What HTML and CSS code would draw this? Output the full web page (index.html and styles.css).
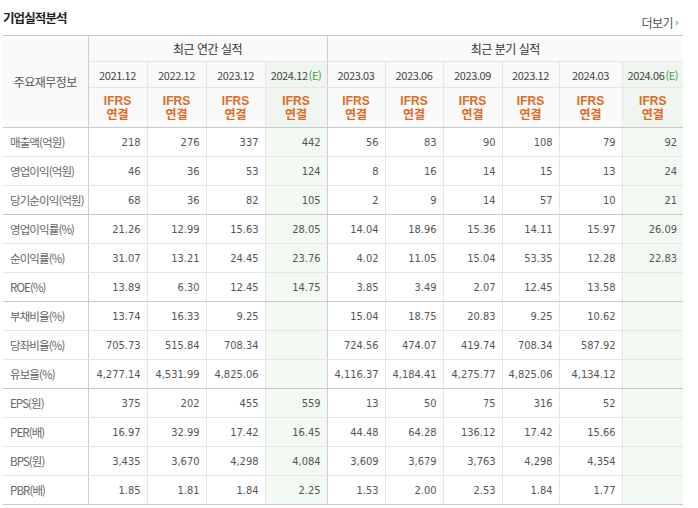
FILE: index.html
```html
<!DOCTYPE html>
<html lang="ko">
<head>
<meta charset="utf-8">
<link rel="stylesheet" href="styles.css">
</head>
<body>
<div class="wrap">
  <div class="top">
    <h2 class="title">기업실적분석</h2>
    <a class="more">더보기<span class="arr"></span></a>
  </div>
  <table class="fin">
    <colgroup>
      <col class="c-label"><col class="c59"><col class="c59"><col class="c59"><col class="c62">
      <col class="c58"><col class="c58"><col class="c59"><col class="c57"><col class="c63"><col class="c61">
    </colgroup>
    <thead>
      <tr class="h1">
        <th rowspan="3" class="lab-h sep-r">주요재무정보</th>
        <th colspan="4" class="sep-r">최근 연간 실적</th>
        <th colspan="6" class="last">최근 분기 실적</th>
      </tr>
      <tr class="h2">
        <th>2021.12</th><th>2022.12</th><th>2023.12</th><th class="est sep-r">2024.12<span class="e">(E)</span></th>
        <th>2023.03</th><th>2023.06</th><th>2023.09</th><th>2023.12</th><th>2024.03</th><th class="est last">2024.06<span class="e">(E)</span></th>
      </tr>
      <tr class="h3">
        <th class="ifrs">IFRS<br>연결</th><th class="ifrs">IFRS<br>연결</th><th class="ifrs">IFRS<br>연결</th><th class="ifrs est sep-r">IFRS<br>연결</th>
        <th class="ifrs">IFRS<br>연결</th><th class="ifrs">IFRS<br>연결</th><th class="ifrs">IFRS<br>연결</th><th class="ifrs">IFRS<br>연결</th><th class="ifrs">IFRS<br>연결</th><th class="ifrs est last">IFRS<br>연결</th>
      </tr>
    </thead>
    <tbody>
      <tr><th class="lab sep-r">매출액(억원)</th><td>218</td><td>276</td><td>337</td><td class="est sep-r">442</td><td>56</td><td>83</td><td>90</td><td>108</td><td>79</td><td class="est last">92</td></tr>
      <tr><th class="lab sep-r">영업이익(억원)</th><td>46</td><td>36</td><td>53</td><td class="est sep-r">124</td><td>8</td><td>16</td><td>14</td><td>15</td><td>13</td><td class="est last">24</td></tr>
      <tr class="grp"><th class="lab sep-r">당기순이익(억원)</th><td>68</td><td>36</td><td>82</td><td class="est sep-r">105</td><td>2</td><td>9</td><td>14</td><td>57</td><td>10</td><td class="est last">21</td></tr>
      <tr><th class="lab sep-r">영업이익률(%)</th><td>21.26</td><td>12.99</td><td>15.63</td><td class="est sep-r">28.05</td><td>14.04</td><td>18.96</td><td>15.36</td><td>14.11</td><td>15.97</td><td class="est last">26.09</td></tr>
      <tr><th class="lab sep-r">순이익률(%)</th><td>31.07</td><td>13.21</td><td>24.45</td><td class="est sep-r">23.76</td><td>4.02</td><td>11.05</td><td>15.04</td><td>53.35</td><td>12.28</td><td class="est last">22.83</td></tr>
      <tr class="grp"><th class="lab sep-r">ROE(%)</th><td>13.89</td><td>6.30</td><td>12.45</td><td class="est sep-r">14.75</td><td>3.85</td><td>3.49</td><td>2.07</td><td>12.45</td><td>13.58</td><td class="est last"></td></tr>
      <tr><th class="lab sep-r">부채비율(%)</th><td>13.74</td><td>16.33</td><td>9.25</td><td class="est sep-r"></td><td>15.04</td><td>18.75</td><td>20.83</td><td>9.25</td><td>10.62</td><td class="est last"></td></tr>
      <tr><th class="lab sep-r">당좌비율(%)</th><td>705.73</td><td>515.84</td><td>708.34</td><td class="est sep-r"></td><td>724.56</td><td>474.07</td><td>419.74</td><td>708.34</td><td>587.92</td><td class="est last"></td></tr>
      <tr class="grp"><th class="lab sep-r">유보율(%)</th><td>4,277.14</td><td>4,531.99</td><td>4,825.06</td><td class="est sep-r"></td><td>4,116.37</td><td>4,184.41</td><td>4,275.77</td><td>4,825.06</td><td>4,134.12</td><td class="est last"></td></tr>
      <tr><th class="lab sep-r">EPS(원)</th><td>375</td><td>202</td><td>455</td><td class="est sep-r">559</td><td>13</td><td>50</td><td>75</td><td>316</td><td>52</td><td class="est last"></td></tr>
      <tr><th class="lab sep-r">PER(배)</th><td>16.97</td><td>32.99</td><td>17.42</td><td class="est sep-r">16.45</td><td>44.48</td><td>64.28</td><td>136.12</td><td>17.42</td><td>15.66</td><td class="est last"></td></tr>
      <tr><th class="lab sep-r">BPS(원)</th><td>3,435</td><td>3,670</td><td>4,298</td><td class="est sep-r">4,084</td><td>3,609</td><td>3,679</td><td>3,763</td><td>4,298</td><td>4,354</td><td class="est last"></td></tr>
      <tr class="grp"><th class="lab sep-r">PBR(배)</th><td>1.85</td><td>1.81</td><td>1.84</td><td class="est sep-r">2.25</td><td>1.53</td><td>2.00</td><td>2.53</td><td>1.84</td><td>1.77</td><td class="est last"></td></tr>
    </tbody>
  </table>
</div>
</body>
</html>
```
FILE: styles.css
```css
html, body {
  margin: 0;
  padding: 0;
  background: #fff;
}
.wrap {
  width: 680px;
  padding-left: 3px;
  font-family: "Noto Sans CJK KR", "Noto Sans", sans-serif;
}
.top {
  display: flex;
  justify-content: space-between;
  align-items: flex-start;
  height: 35px;
}
.title {
  margin: 0;
  padding-top: 10px;
  font-size: 12.5px;
  line-height: 16px;
  font-weight: bold;
  color: #222;
  letter-spacing: -0.9px;
}
.more {
  margin-top: 15px;
  margin-right: 4px;
  font-size: 12px;
  line-height: 16px;
  color: #555;
  letter-spacing: -0.5px;
  display: flex;
  align-items: center;
}
.arr {
  display: inline-block;
  margin-left: 3px;
  width: 0;
  height: 0;
  border-top: 3px solid transparent;
  border-bottom: 3px solid transparent;
  border-left: 3px solid #bbb;
}
.fin {
  width: 680px;
  table-layout: fixed;
  border-collapse: collapse;
  border-top: 1px solid #c8c8c8;
  border-bottom: 1px solid #c8c8c8;
  border-left: 0;
  border-right: 0;
}
.c-label { width: 85px; }
.c57 { width: 57px; }
.c58 { width: 58px; }
.c59 { width: 59px; }
.c61 { width: 61px; }
.c62 { width: 62px; }
.c63 { width: 63px; }
.fin th, .fin td {
  padding: 0;
  border: 1px solid #e6e6e6;
  border-top: 0;
  white-space: nowrap;
}
.fin th.lab, .fin th.lab-h { border-left: 0; }
.fin th.last, .fin td.last { border-right: 0; }
.fin thead th {
  background: #fafafa;
  font-weight: normal;
  color: #333;
  text-align: center;
}
.fin .h1 { height: 26px; }
.fin .h2 { height: 26px; }
.fin .h3 { height: 40px; }
.fin .h1 th {
  font-size: 12px;
  letter-spacing: -0.5px;
  color: #333;
}
.fin .h2 th {
  font-size: 11px;
  color: #444;
  letter-spacing: -0.4px;
}
.fin .h3 th { border-bottom: 1px solid #c8c8c8; }
.fin .lab-h {
  font-size: 12px;
  color: #555 !important;
  letter-spacing: -1px;
  border-bottom: 1px solid #c8c8c8;
}
.fin thead th.est { background: #eff6ef; }
.e { color: #3c9a4c; margin-left: 1px; }
.ifrs {
  color: #e06a1f !important;
  font-weight: bold !important;
  font-size: 12px;
  line-height: 14px;
  font-family: "Liberation Sans", "Noto Sans CJK KR", sans-serif;
}
.fin tbody tr { height: 29px; }
.fin tbody th.lab {
  text-align: left;
  padding-left: 7px;
  font-weight: normal;
  font-size: 11.5px;
  color: #666;
  letter-spacing: -0.9px;
  background: #fff;
}
.fin tbody td {
  text-align: right;
  padding-right: 6px;
  font-family: "DejaVu Sans Condensed", "DejaVu Sans", sans-serif;
  font-stretch: condensed;
  font-size: 11px;
  color: #555;
}
.fin tbody td.est { background: #f3f9f3; }
.fin tbody tr.grp > * { border-bottom: 1px solid #c8c8c8; }
.fin .sep-r { border-right: 1px solid #cfcfcf; }
```
